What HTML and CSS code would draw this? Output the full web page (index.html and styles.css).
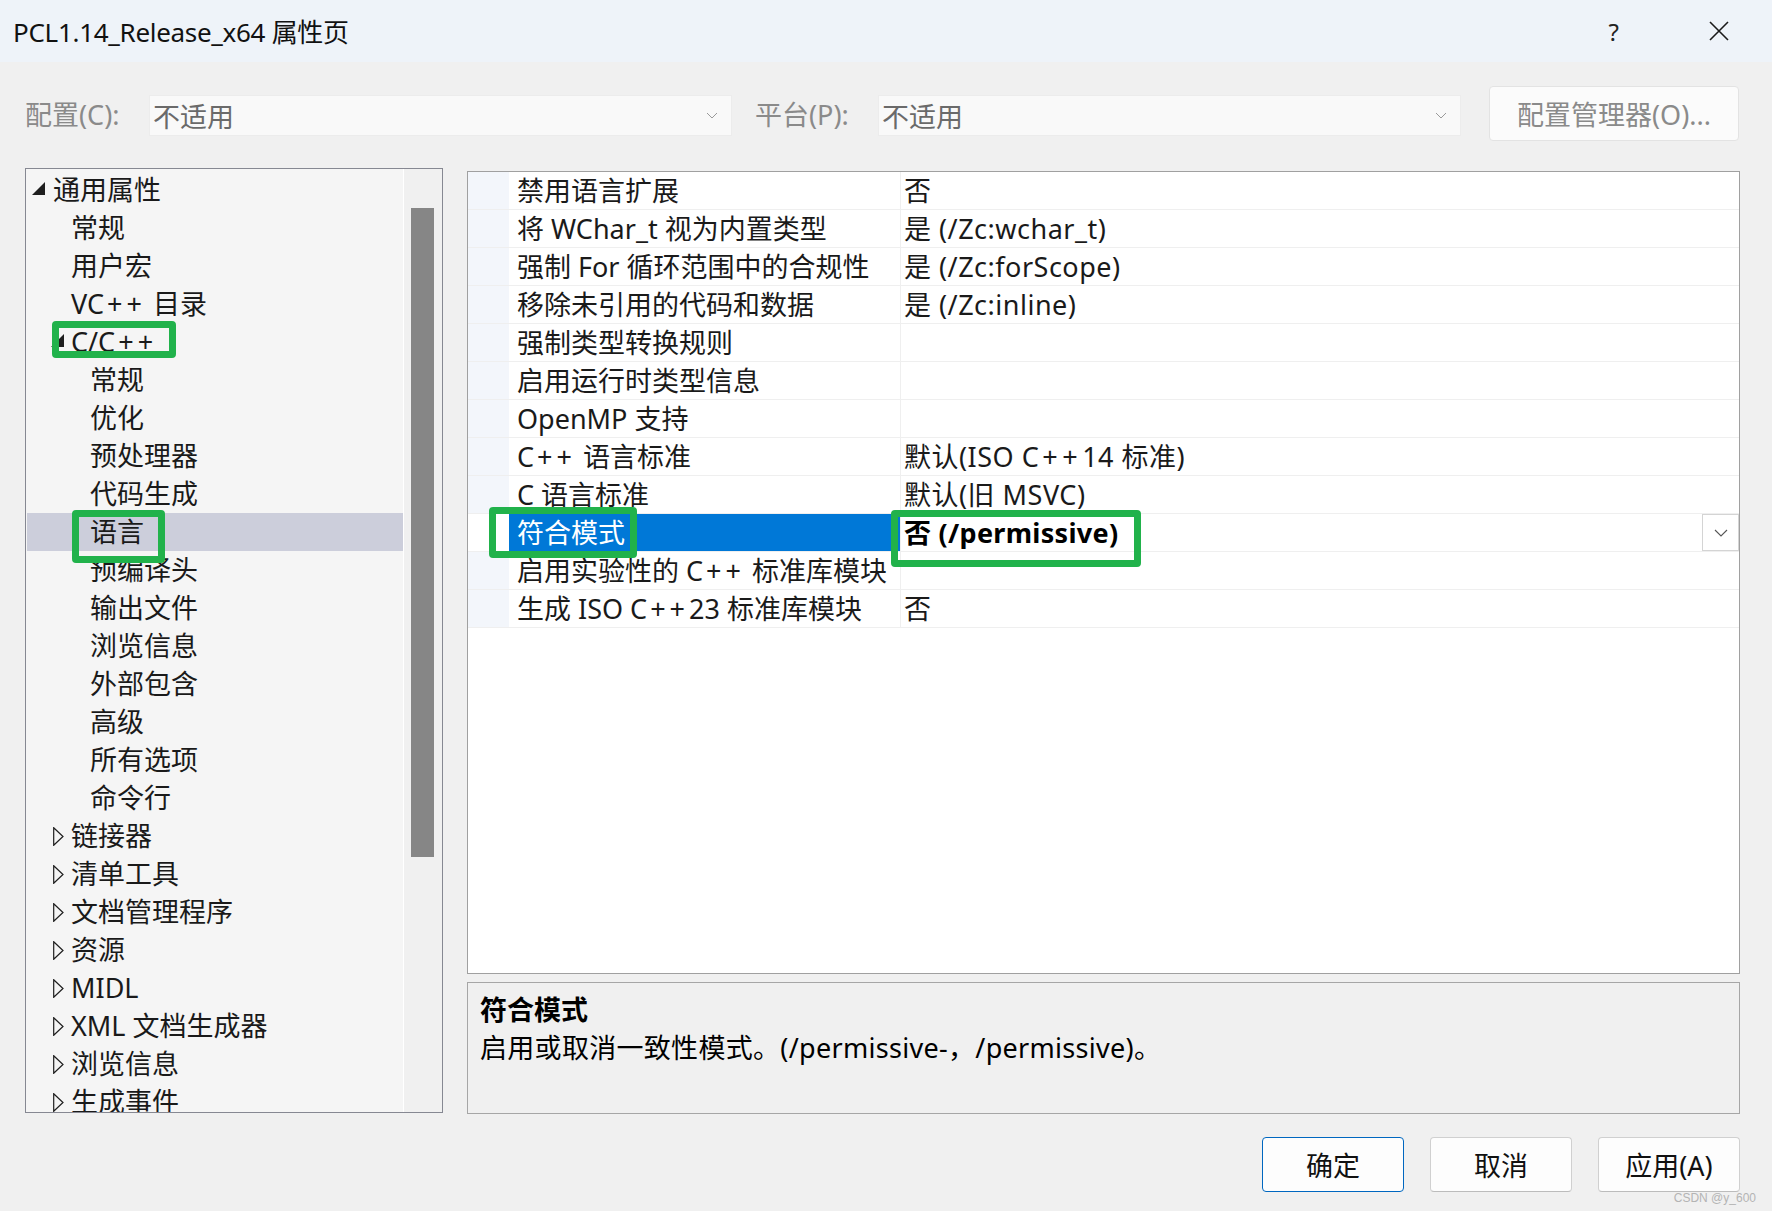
FILE: index.html
```html
<!DOCTYPE html>
<html>

<head>
  <title>PCL1.14_Release_x64 属性页</title>
  <link rel="stylesheet" href="styles.css">
</head>

<body>
 <div class="window">
  <div class="titlebar">
    <span class="title">PCL1.14_Release_x64 属性页</span>
    <span class="help">?</span>
    <svg class="close" width="20" height="20" viewBox="0 0 20 20">
      <path d="M1 1 L19 19 M19 1 L1 19" stroke="#1a1a1a" stroke-width="1.6" fill="none" />
    </svg>
  </div>

  <div class="config-row">
    <span class="cfg-label">配置(C):</span>
    <div class="combo">
      <span>不适用</span>
      <svg width="12" height="8" viewBox="0 0 12 8"><path d="M1 1 L6 6 L11 1" stroke="#9a9a9a" stroke-width="1" fill="none" /></svg>
    </div>
    <span class="cfg-label second">平台(P):</span>
    <div class="combo">
      <span>不适用</span>
      <svg width="12" height="8" viewBox="0 0 12 8"><path d="M1 1 L6 6 L11 1" stroke="#9a9a9a" stroke-width="1" fill="none" /></svg>
    </div>
    <div class="cfg-btn">配置管理器(O)...</div>
  </div>

  <div class="main">
    <div class="tree">
      <div class="tree-list">
        <div class="tree-row lv0"><span class="exp"><svg width="13" height="13" viewBox="0 0 13 13"><path d="M13 0 L13 13 L0 13 Z" fill="#1e1e1e" /></svg></span><span>通用属性</span></div>
        <div class="tree-row lv1"><span class="exp"></span><span>常规</span></div>
        <div class="tree-row lv1"><span class="exp"></span><span>用户宏</span></div>
        <div class="tree-row lv1"><span class="exp"></span><span>VC<span class="pp">++</span> 目录</span></div>
        <div class="tree-row lv1"><span class="exp"><svg width="13" height="13" viewBox="0 0 13 13"><path d="M13 0 L13 13 L0 13 Z" fill="#1e1e1e" /></svg></span><span>C/C<span class="pp">++</span></span></div>
        <div class="tree-row lv2"><span class="exp"></span><span>常规</span></div>
        <div class="tree-row lv2"><span class="exp"></span><span>优化</span></div>
        <div class="tree-row lv2"><span class="exp"></span><span>预处理器</span></div>
        <div class="tree-row lv2"><span class="exp"></span><span>代码生成</span></div>
        <div class="tree-row lv2 selected"><span class="exp"></span><span>语言</span></div>
        <div class="tree-row lv2"><span class="exp"></span><span>预编译头</span></div>
        <div class="tree-row lv2"><span class="exp"></span><span>输出文件</span></div>
        <div class="tree-row lv2"><span class="exp"></span><span>浏览信息</span></div>
        <div class="tree-row lv2"><span class="exp"></span><span>外部包含</span></div>
        <div class="tree-row lv2"><span class="exp"></span><span>高级</span></div>
        <div class="tree-row lv2"><span class="exp"></span><span>所有选项</span></div>
        <div class="tree-row lv2"><span class="exp"></span><span>命令行</span></div>
        <div class="tree-row lv1"><span class="exp"><svg class="closed" width="11" height="19" viewBox="0 0 11 19"><path d="M0.7 0.7 L10 9.5 L0.7 18.3 Z" stroke="#1e1e1e" stroke-width="1.2" fill="none" /></svg></span><span>链接器</span></div>
        <div class="tree-row lv1"><span class="exp"><svg class="closed" width="11" height="19" viewBox="0 0 11 19"><path d="M0.7 0.7 L10 9.5 L0.7 18.3 Z" stroke="#1e1e1e" stroke-width="1.2" fill="none" /></svg></span><span>清单工具</span></div>
        <div class="tree-row lv1"><span class="exp"><svg class="closed" width="11" height="19" viewBox="0 0 11 19"><path d="M0.7 0.7 L10 9.5 L0.7 18.3 Z" stroke="#1e1e1e" stroke-width="1.2" fill="none" /></svg></span><span>文档管理程序</span></div>
        <div class="tree-row lv1"><span class="exp"><svg class="closed" width="11" height="19" viewBox="0 0 11 19"><path d="M0.7 0.7 L10 9.5 L0.7 18.3 Z" stroke="#1e1e1e" stroke-width="1.2" fill="none" /></svg></span><span>资源</span></div>
        <div class="tree-row lv1"><span class="exp"><svg class="closed" width="11" height="19" viewBox="0 0 11 19"><path d="M0.7 0.7 L10 9.5 L0.7 18.3 Z" stroke="#1e1e1e" stroke-width="1.2" fill="none" /></svg></span><span>MIDL</span></div>
        <div class="tree-row lv1"><span class="exp"><svg class="closed" width="11" height="19" viewBox="0 0 11 19"><path d="M0.7 0.7 L10 9.5 L0.7 18.3 Z" stroke="#1e1e1e" stroke-width="1.2" fill="none" /></svg></span><span>XML 文档生成器</span></div>
        <div class="tree-row lv1"><span class="exp"><svg class="closed" width="11" height="19" viewBox="0 0 11 19"><path d="M0.7 0.7 L10 9.5 L0.7 18.3 Z" stroke="#1e1e1e" stroke-width="1.2" fill="none" /></svg></span><span>浏览信息</span></div>
        <div class="tree-row lv1"><span class="exp"><svg class="closed" width="11" height="19" viewBox="0 0 11 19"><path d="M0.7 0.7 L10 9.5 L0.7 18.3 Z" stroke="#1e1e1e" stroke-width="1.2" fill="none" /></svg></span><span>生成事件</span></div>
      </div>
      <div class="scrollbar"><div class="thumb"></div></div>
    </div>

    <div class="right">
      <div class="grid">
        <div class="grid-row"><div class="gutter"></div><div class="name">禁用语言扩展</div><div class="value"><span>否</span></div></div>
        <div class="grid-row"><div class="gutter"></div><div class="name">将 WChar_t 视为内置类型</div><div class="value"><span>是 (/Zc:wchar_t)</span></div></div>
        <div class="grid-row"><div class="gutter"></div><div class="name">强制 For 循环范围中的合规性</div><div class="value"><span>是 (/Zc:forScope)</span></div></div>
        <div class="grid-row"><div class="gutter"></div><div class="name">移除未引用的代码和数据</div><div class="value"><span>是 (/Zc:inline)</span></div></div>
        <div class="grid-row"><div class="gutter"></div><div class="name">强制类型转换规则</div><div class="value"></div></div>
        <div class="grid-row"><div class="gutter"></div><div class="name">启用运行时类型信息</div><div class="value"></div></div>
        <div class="grid-row"><div class="gutter"></div><div class="name">OpenMP 支持</div><div class="value"></div></div>
        <div class="grid-row"><div class="gutter"></div><div class="name">C<span class="pp">++</span> 语言标准</div><div class="value"><span>默认(ISO C<span class="pp">++</span>14 标准)</span></div></div>
        <div class="grid-row"><div class="gutter"></div><div class="name">C 语言标准</div><div class="value"><span>默认(旧 MSVC)</span></div></div>
        <div class="grid-row active">
          <div class="gutter"></div>
          <div class="name">符合模式</div>
          <div class="value">
            <b>否 (/permissive)</b>
            <div class="drop-btn"><svg width="14" height="8" viewBox="0 0 14 8"><path d="M1 1 L7 7 L13 1" stroke="#555" stroke-width="1.1" fill="none" /></svg></div>
          </div>
        </div>
        <div class="grid-row"><div class="gutter"></div><div class="name">启用实验性的 C<span class="pp">++</span> 标准库模块</div><div class="value"></div></div>
        <div class="grid-row"><div class="gutter"></div><div class="name">生成 ISO C<span class="pp">++</span>23 标准库模块</div><div class="value"><span>否</span></div></div>
      </div>
      <div class="desc">
        <div class="desc-title">符合模式</div>
        <div class="desc-text">启用或取消一致性模式。(/permissive-，/permissive)。</div>
      </div>
    </div>
  </div>

  <div class="footer">
    <div class="btn default">确定</div>
    <div class="btn">取消</div>
    <div class="btn">应用(A)</div>
  </div>

  <!-- green marks drawn on the screenshot -->
  <div class="mark mark-cpp"></div>
  <div class="mark mark-lang"></div>
  <div class="mark mark-name"></div>
  <div class="mark mark-value"></div>

  <div class="watermark">CSDN @y_600</div>
 </div>
</body>

</html>
```

FILE: styles.css
```css
body {
    margin: 0;
    background-color: #f0f0f0;
}
.window {
    position: relative;
    width: 1772px;
    height: 1211px;
    overflow: hidden;
    background-color: #f0f0f0;
    font-family: "Noto Sans", "Noto Sans CJK SC", sans-serif;
    font-size: 27px;
    color: #1a1a1a;
}
/* the "++" is set wide in the dialog font */
.pp {
    padding-left: 3px;
    letter-spacing: 4px;
}

/* title bar */
.titlebar {
    height: 62px;
    background-color: #eef3f9;
    display: flex;
    align-items: center;
    padding-left: 13px;
}
.title {
    font-size: 26px;
    letter-spacing: -0.3px;
    color: #111;
}
.help {
    margin-left: auto;
    font-size: 24px;
    color: #222;
}
.close {
    margin-left: 90px;
    margin-right: 43px;
}

/* configuration row */
.config-row {
    display: flex;
    align-items: center;
    height: 55px;
    margin-top: 24px;
    padding-left: 25px;
}
.cfg-label {
    width: 124px;
    color: #8a8a8a;
}
.cfg-label.second {
    margin-left: 23px;
    width: 123px;
}
.combo {
    width: 583px;
    height: 41px;
    box-sizing: border-box;
    margin-top: 4px;
    background-color: #f9f9f9;
    border: 1px solid #ececec;
    display: flex;
    align-items: center;
    justify-content: space-between;
    padding: 0 13px 0 3px;
    color: #6a6a6a;
}
.cfg-btn {
    margin-left: 28px;
    width: 250px;
    height: 55px;
    box-sizing: border-box;
    background-color: #fbfbfb;
    border: 1px solid #e3e3e3;
    border-radius: 4px;
    display: flex;
    align-items: center;
    justify-content: center;
    color: #8a8a8a;
}

/* main area */
.main {
    display: flex;
    margin-top: 27px;
    padding-left: 25px;
    gap: 24px;
}
.tree {
    width: 418px;
    height: 945px;
    box-sizing: border-box;
    border: 1px solid #868892;
    background-color: #f5f5f5;
    display: flex;
}
.tree-list {
    width: 378px;
    padding-top: 2px;
    overflow: hidden;
}
.tree-row {
    height: 38px;
    line-height: 38px;
    display: flex;
    align-items: center;
    white-space: pre;
    margin-left: 1px;
}
.tree-row.selected {
    background-color: #cccedb;
}
.exp {
    width: 22px;
    height: 38px;
    flex-shrink: 0;
    display: flex;
    align-items: center;
}
.lv0 {
    padding-left: 4px;
}
.lv0 .exp svg {
    margin-left: 1px;
    margin-top: -3px;
}
.lv1 {
    padding-left: 22px;
}
.lv1 .exp svg {
    margin-left: 2px;
    margin-top: -3px;
}
.lv1 .exp svg.closed {
    margin-left: 4px;
    margin-top: 0;
}
.lv2 {
    padding-left: 41px;
}
.scrollbar {
    width: 38px;
    border-left: 1px solid #ffffff;
    background-color: #f0f0f0;
}
.thumb {
    margin-top: 39px;
    margin-left: 7px;
    width: 23px;
    height: 649px;
    background-color: #868686;
}

/* property grid */
.right {
    width: 1273px;
    display: flex;
    flex-direction: column;
    gap: 8px;
}
.grid {
    margin-top: 3px;
    height: 803px;
    box-sizing: border-box;
    border: 1px solid #a0a0a0;
    background-color: #ffffff;
}
.grid-row {
    display: flex;
    height: 38px;
    box-sizing: border-box;
    border-bottom: 1px solid #efefef;
    line-height: 37px;
    white-space: pre;
}
.gutter {
    width: 41px;
    background-color: #f3f6fb;
}
.name {
    width: 392px;
    box-sizing: border-box;
    padding-left: 8px;
    border-right: 1px solid #efefef;
}
.value {
    flex: 1;
    padding-left: 3px;
    letter-spacing: 0.5px;
    display: flex;
    justify-content: space-between;
}
.value .pp {
    letter-spacing: 4.5px;
}
.grid-row.active .gutter {
    background-color: #ffffff;
}
.grid-row.active .name {
    background-color: #0078d7;
    color: #ffffff;
}
.value b {
    font-weight: 700;
    letter-spacing: 0.3px;
    color: #000;
}
.drop-btn {
    width: 37px;
    height: 37px;
    box-sizing: border-box;
    border: 1px solid #d4d4d4;
    background-color: #ffffff;
    display: flex;
    align-items: center;
    justify-content: center;
}

/* description */
.desc {
    height: 132px;
    box-sizing: border-box;
    border: 1px solid #a6a6a6;
    background-color: #f0f0f0;
    padding: 8px 12px;
    line-height: 38px;
    color: #000;
}
.desc-title {
    font-weight: 700;
}
.desc-text {
    letter-spacing: 0.3px;
}

/* bottom buttons */
.footer {
    display: flex;
    justify-content: flex-end;
    gap: 26px;
    margin-top: 23px;
    padding-right: 32px;
}
.btn {
    width: 142px;
    height: 55px;
    box-sizing: border-box;
    background-color: #fdfdfd;
    border: 1px solid #d0d0d0;
    border-bottom-color: #bcbcbc;
    border-radius: 4px;
    display: flex;
    align-items: center;
    justify-content: center;
    color: #111;
}
.btn.default {
    border: 1.5px solid #0067c0;
}

/* annotation boxes */
.mark {
    position: absolute;
    box-sizing: border-box;
    border: 7px solid #21b24b;
    border-radius: 4px;
}
.mark-cpp {
    left: 52px;
    top: 321px;
    width: 124px;
    height: 37px;
}
.mark-lang {
    left: 72px;
    top: 510px;
    width: 93px;
    height: 53px;
}
.mark-name {
    left: 489px;
    top: 507px;
    width: 148px;
    height: 51px;
}
.mark-value {
    left: 891px;
    top: 510px;
    width: 250px;
    height: 57px;
}

.watermark {
    position: absolute;
    right: 16px;
    bottom: 6px;
    font-family: "Liberation Sans", sans-serif;
    font-size: 12px;
    color: #b4b4b4;
}
```
